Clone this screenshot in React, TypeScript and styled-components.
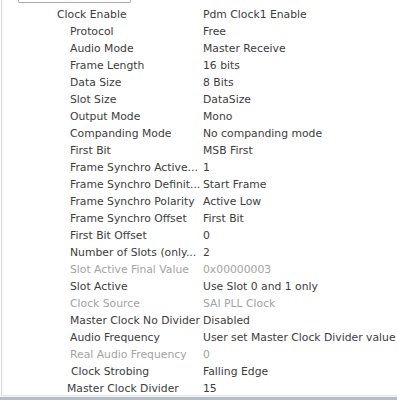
import React from "react";
import styled, { createGlobalStyle } from "styled-components";

const Global = createGlobalStyle`
  html, body { margin: 0; padding: 0; background: #ffffff; }
  body { font-family: "DejaVu Sans", "Liberation Sans", sans-serif; }
`;

const Frame = styled.div`
  width: 397px;
  height: 400px;
  overflow: hidden;
  display: flex;
  flex-direction: column;
  background: #ffffff;
`;

const Panel = styled.div`
  flex: 1;
  margin-left: 1px;
  border-left: 1px solid #dcdcdc;
  border-bottom: 1px solid #e6e9ec;
  display: flex;
  flex-direction: column;
  overflow: hidden;
`;

const ComboEdge = styled.div`
  margin-left: 16px;
  width: 111px;
  height: 2px;
  border: 1px solid #a9a9a9;
  border-top: none;
  border-radius: 0 0 2px 2px;
  background: #ffffff;
  flex: none;
`;

const Rows = styled.div`
  display: flex;
  flex-direction: column;
  padding-top: 3px;
`;

const Row = styled.div<{ $disabled?: boolean }>`
  display: grid;
  grid-template-columns: 199px 1fr;
  height: 17px;
  align-items: center;
  font-size: 10.8px;
  color: ${(p) => (p.$disabled ? "#a3a3a3" : "#3c3c3c")};
  white-space: nowrap;
`;

const Label = styled.div<{ $indent: number }>`
  padding-left: ${(p) => p.$indent}px;
  overflow: hidden;
`;

const Value = styled.div`
  padding-left: 2px;
  overflow: hidden;
`;

const Bar = styled.div`
  height: 3px;
  flex: none;
  background: #b4bec6;
  border-top: 1px solid #f2f4f6;
`;

type Item = { label: string; value: string; indent: number; disabled?: boolean };

const items: Item[] = [
  { label: "Clock Enable", value: "Pdm Clock1 Enable", indent: 55 },
  { label: "Protocol", value: "Free", indent: 68 },
  { label: "Audio Mode", value: "Master Receive", indent: 68 },
  { label: "Frame Length", value: "16 bits", indent: 68 },
  { label: "Data Size", value: "8 Bits", indent: 68 },
  { label: "Slot Size", value: "DataSize", indent: 68 },
  { label: "Output Mode", value: "Mono", indent: 68 },
  { label: "Companding Mode", value: "No companding mode", indent: 68 },
  { label: "First Bit", value: "MSB First", indent: 68 },
  { label: "Frame Synchro Active...", value: "1", indent: 68 },
  { label: "Frame Synchro Definit...", value: "Start Frame", indent: 68 },
  { label: "Frame Synchro Polarity", value: "Active Low", indent: 68 },
  { label: "Frame Synchro Offset", value: "First Bit", indent: 68 },
  { label: "First Bit Offset", value: "0", indent: 68 },
  { label: "Number of Slots (only...", value: "2", indent: 68 },
  { label: "Slot Active Final Value", value: "0x00000003", indent: 68, disabled: true },
  { label: "Slot Active", value: "Use Slot 0 and 1 only", indent: 68 },
  { label: "Clock Source", value: "SAI PLL Clock", indent: 68, disabled: true },
  { label: "Master Clock No Divider", value: "Disabled", indent: 68 },
  { label: "Audio Frequency", value: "User set Master Clock Divider value", indent: 68 },
  { label: "Real Audio Frequency", value: "0", indent: 68, disabled: true },
  { label: "Clock Strobing", value: "Falling Edge", indent: 69 },
  { label: "Master Clock Divider", value: "15", indent: 65 },
];

export default function App() {
  return (
    <Frame>
      <Global />
      <Panel>
        <ComboEdge />
        <Rows>
          {items.map((it) => (
            <Row key={it.label} $disabled={it.disabled}>
              <Label $indent={it.indent}>{it.label}</Label>
              <Value>{it.value}</Value>
            </Row>
          ))}
        </Rows>
      </Panel>
      <Bar />
    </Frame>
  );
}
